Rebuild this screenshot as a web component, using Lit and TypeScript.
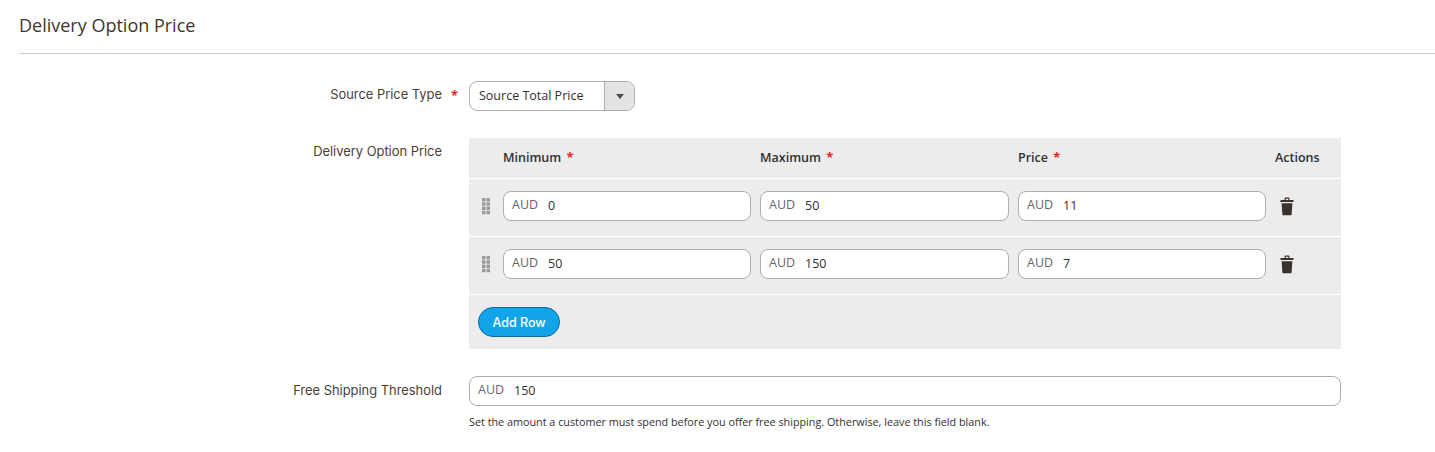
import { LitElement, html, css, svg } from "lit";
import { customElement } from "lit/decorators.js";

const trash = html`<svg class="trash" width="14" height="19" viewBox="0 0 14 19"><path fill="#3a332d" d="M4.6 3V1.6C4.6.9 5.1.5 5.7.5h2.6c.6 0 1.100.4 1.100 1.100V3H13.500V5H.5V3zM5.800 3h2.400V1.700H5.800zM1.600 6.200H12.400L11.600 17.400c0 .5-.4.9-.9.9H3.300c-.5 0-.9-.4-.9-.9z"/></svg>`;

const dots = [0, 1, 2, 3].flatMap((r) => [0, 1].map((c) => svg`<rect x=${c * 4.5} y=${r * 4.25} width="3.500" height="3.500"/>`));
const grip = html`<svg class="grip" width="8" height="17" viewBox="0 0 8 17" fill="#9a9a9a">${dots}</svg>`;

@customElement("app-root")
export class AppRoot extends LitElement {
  static styles = css`
    :host {
      display: block;
      width: 1435px;
      height: 452px;
      background: #fff;
      font-family: "Open Sans", sans-serif;
      color: #303030;
      overflow: hidden;
    }
    .head {
      margin-left: 19px;
      height: 54px;
      box-sizing: border-box;
      border-bottom: 1px solid #cccccc;
      padding-top: 13px;
      font-size: 18px;
      line-height: 24px;
      color: #41362f;
    }
    .form {
      margin: 27px 0 0 19px;
      display: grid;
      grid-template-columns: 423px 872px;
      column-gap: 27px;
      align-items: start;
    }
    .label {
      font-family: Inter, sans-serif;
      font-size: 12.900px;
      line-height: 16px;
      text-align: right;
      color: #4a4038;
      position: relative;
    }
    .l1 { padding-top: 6px; }
    .l2 { margin-top: 27px; padding-top: 6px; }
    .l3 { margin-top: 27px; padding-top: 7px; }
    .label .req {
      position: absolute;
      left: calc(100% + 9px);
      top: 6px;
      color: #e22626;
      font-size: 13px;
      font-weight: 700;
      font-family: "Open Sans", sans-serif;
    }
    .select {
      width: 166px;
      height: 30px;
      box-sizing: border-box;
      border: 1px solid #adadad;
      border-radius: 8px;
      display: flex;
      overflow: hidden;
      font-size: 12.500px;
      line-height: 28px;
      color: #303030;
    }
    .select .txt { flex: 1; padding-left: 9px; }
    .select .btn {
      width: 30px;
      box-sizing: border-box;
      background: #e3e3e3;
      border-left: 1px solid #adadad;
      display: flex;
      align-items: center;
      justify-content: center;
    }
    .caret {
      width: 0;
      height: 0;
      border-left: 4px solid transparent;
      border-right: 4px solid transparent;
      border-top: 5px solid #514943;
    }
    .table {
      margin-top: 27px;
      background: #ececec;
      height: 211px;
    }
    .row {
      display: grid;
      grid-template-columns: 25px 248px 249px 248px auto;
      column-gap: 9px;
      align-items: center;
      border-bottom: 1px solid #fff;
      box-sizing: border-box;
    }
    .hdr {
      height: 41px;
      font-size: 12.500px;
      font-weight: 600;
      color: #303030;
      padding-bottom: 2px;
    }
    .body { height: 58px; padding-bottom: 3px; }
    .hdr .req { color: #e22626; font-weight: 700; font-size: 13px; margin-left: 2px; }
    .grip { margin-left: 13px; }
    .trash { display: block; margin-left: 5px; }
    .input {
      height: 30px;
      box-sizing: border-box;
      border: 1px solid #adadad;
      border-radius: 8px;
      background: #fff;
      display: flex;
      align-items: center;
      padding-bottom: 2px;
      font-size: 12.500px;
      color: #303030;
    }
    .aud { color: #666; margin-left: 8px; width: 36px; position: relative; top: -1px; }
    .foot { padding: 12px 0 0 9px; }
    .add {
      display: block;
      width: 82px;
      height: 30px;
      box-sizing: border-box;
      border: 1px solid #0a6c9f;
      border-radius: 15px;
      background: #12a4ea;
      color: #fff;
      font-family: Inter, sans-serif;
      font-size: 12.500px;
      font-weight: 500;
      padding: 0;
    }
    .free { margin-top: 27px; }
    .note { font-size: 10.800px; line-height: 14px; margin-top: 9px; color: #303030; }
  `;

  private inp(v: string) {
    return html`<div class="input"><span class="aud">AUD</span><span>${v}</span></div>`;
  }

  private row(a: string, b: string, c: string) {
    return html`<div class="row body">${grip}${this.inp(a)}${this.inp(b)}${this.inp(c)}${trash}</div>`;
  }

  render() {
    return html`
      <div class="head">Delivery Option Price</div>
      <div class="form">
        <div class="label l1">Source Price Type<span class="req">*</span></div>
        <div class="select">
          <span class="txt">Source Total Price</span>
          <span class="btn"><span class="caret"></span></span>
        </div>
        <div class="label l2">Delivery Option Price</div>
        <div class="table">
          <div class="row hdr">
            <span></span>
            <span>Minimum <span class="req">*</span></span>
            <span>Maximum <span class="req">*</span></span>
            <span>Price <span class="req">*</span></span>
            <span>Actions</span>
          </div>
          ${this.row("0", "50", "11")}
          ${this.row("50", "150", "7")}
          <div class="foot"><button class="add">Add Row</button></div>
        </div>
        <div class="label l3">Free Shipping Threshold</div>
        <div class="free">
          ${this.inp("150")}
          <div class="note">Set the amount a customer must spend before you offer free shipping. Otherwise, leave this field blank.</div>
        </div>
      </div>
    `;
  }
}
